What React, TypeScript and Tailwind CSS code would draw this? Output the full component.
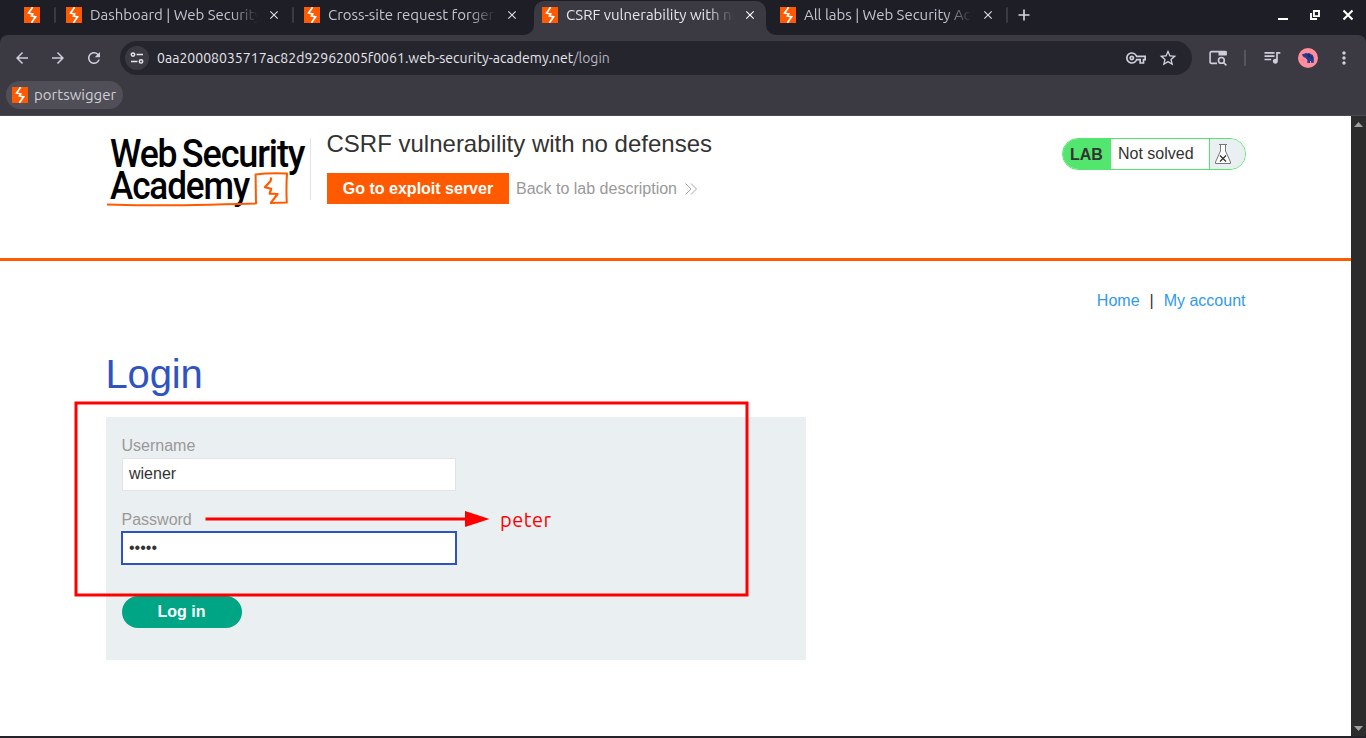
import { ReactNode } from 'react';
import {
  MdArrowBack,
  MdArrowForward,
  MdClose,
  MdMoreVert,
  MdOutlineVpnKey,
  MdQueueMusic,
  MdRefresh,
  MdStarBorder,
} from 'react-icons/md';

function Favicon() {
  return (
    <svg className="h-4 w-4 shrink-0" viewBox="0 0 16 16">
      <rect width="16" height="16" fill="#ff5a00" />
      <path
        d="M8.6 0.3 L4.6 6 L8.7 7 L7.4 9 L11.6 9.8 L7.4 15.8"
        fill="none"
        stroke="#fff"
        strokeWidth="1.7"
      />
    </svg>
  );
}

function Separator() {
  return (
    <div className="flex h-full w-1.5 shrink-0 items-center justify-center pb-[5px]">
      <div className="h-4 w-0.5 rounded-sm bg-[#3b3a43]" />
    </div>
  );
}

function Tab({ title, active = false }: { title: string; active?: boolean }) {
  return (
    <div
      className={
        'relative flex h-[34px] w-[232px] shrink-0 items-center self-end rounded-t-[10px] pb-1.5 pl-2 ' +
        (active ? 'bg-[#3b3a43] text-[#e6e5ea]' : 'text-[#c5c4d0]')
      }
    >
      <Favicon />
      <div className="ml-2 w-[168px] overflow-hidden whitespace-nowrap [mask-image:linear-gradient(to_right,black_84%,transparent)] text-[15px] leading-5 tracking-[-0.03px]">
        {title}
      </div>
      <MdClose className={'ml-[9px] h-[14px] w-[14px] ' + (active ? 'text-white' : 'text-[#dddce4]')} />
      {active && (
        <>
          <svg className="absolute bottom-0 -left-[10px] h-[10px] w-[10px]" viewBox="0 0 10 10">
            <path d="M10 0 A10 10 0 0 1 0 10 H10 Z" fill="#3b3a43" />
          </svg>
          <svg className="absolute -right-[10px] bottom-0 h-[10px] w-[10px]" viewBox="0 0 10 10">
            <path d="M0 0 A10 10 0 0 0 10 10 H0 Z" fill="#3b3a43" />
          </svg>
        </>
      )}
    </div>
  );
}

function TabStrip() {
  return (
    <div className="flex h-[35px] items-center bg-[#1e1e27]">
      <div className="flex w-[52px] shrink-0 pb-[5px] pl-6">
        <Favicon />
      </div>
      <Separator />
      <Tab title="Dashboard | Web Security" />
      <Separator />
      <Tab title="Cross-site request forgery" />
      <div className="w-1.5 shrink-0" />
      <Tab title="CSRF vulnerability with no" active />
      <div className="w-1.5 shrink-0" />
      <Tab title="All labs | Web Security Acad" />
      <Separator />
      <svg className="mb-[5px] ml-2 h-[12px] w-[12px]" viewBox="0 0 12 12">
        <path d="M6 0.5 V11.5 M0.5 6 H11.5" stroke="#d8d7e0" strokeWidth="1.6" />
      </svg>
      <div className="mr-3 mb-[5px] ml-auto flex items-center">
        <svg className="h-3 w-3" viewBox="0 0 12 12">
          <path d="M1 10 H11" stroke="#fff" strokeWidth="2" />
        </svg>
        <svg className="ml-5 h-3 w-3" viewBox="0 0 12 12">
          <path d="M4.9 2 H10 V7.1 H4.9 Z M2 4 V10 H8" fill="none" stroke="#fff" strokeWidth="1.9" />
        </svg>
        <svg className="ml-[21px] h-3 w-3" viewBox="0 0 12 12">
          <path d="M1.5 1.5 L10.5 10.5 M10.5 1.5 L1.5 10.5" stroke="#fff" strokeWidth="2.1" />
        </svg>
      </div>
    </div>
  );
}

function Toolbar() {
  return (
    <div className="flex h-[46px] items-center bg-[#3b3a43] pl-[13px] text-[#cfcedb]">
      <MdArrowBack className="h-[18px] w-[18px]" />
      <MdArrowForward className="ml-[18px] h-[18px] w-[18px]" />
      <MdRefresh className="ml-[18px] h-[18px] w-[18px]" />
      <div className="ml-[17px] flex h-[34px] w-[1072px] items-center rounded-full bg-[#25252e] pl-[5px]">
        <div className="flex h-6 w-6 items-center justify-center rounded-full bg-[#3b3a43]">
          <svg className="h-[14px] w-[14px]" viewBox="0 0 14 14">
            <g fill="none" stroke="#e6e5ea" strokeWidth="1.5">
              <circle cx="3" cy="3.6" r="1.7" />
              <path d="M6.6 3.6 H13" />
              <circle cx="11" cy="10.4" r="1.7" />
              <path d="M1 10.4 H7.4" />
            </g>
          </svg>
        </div>
        <div className="ml-2 whitespace-nowrap text-[14px] leading-5 tracking-[0.03px] text-[#e6e5ea]">
          0aa20008035717ac82d92962005f0061.web-security-academy.net<span className="text-[#b5b4bf]">/login</span>
        </div>
        <MdOutlineVpnKey className="mr-3 ml-auto h-5 w-5" />
        <MdStarBorder className="mr-[14px] h-5 w-5" />
      </div>
      <svg className="ml-[17px] h-[16px] w-[18px]" viewBox="0 0 18 16">
        <path d="M8 13.4 H2.5 Q1.1 13.4 1.1 12 V3 Q1.1 1.6 2.5 1.6 H16 Q17 1.6 17 2.8 V5" fill="none" stroke="#cfcedb" strokeWidth="1.6" />
        <path d="M9.5 1 H17.6 V5.6 H9.5 Z" fill="#cfcedb" />
        <circle cx="12.4" cy="10.4" r="2.9" fill="none" stroke="#cfcedb" strokeWidth="1.6" />
        <path d="M14.5 12.5 L17.4 15.4" stroke="#cfcedb" strokeWidth="1.7" />
      </svg>
      <div className="ml-[17px] h-4 w-0.5 bg-[#55545f]" />
      <MdQueueMusic className="mb-0.5 ml-4 h-5 w-5" />
      <svg className="ml-4 h-5 w-5" viewBox="0 0 20 20">
        <circle cx="10" cy="10" r="10" fill="#ff8d9b" />
        <path
          d="M4 7 Q4.4 5.6 6.4 5.8 Q8 4.6 9.6 5.4 Q11 4.6 12.4 5.8 Q15.4 6.6 15.8 9.4 V14.8 H13 V13 H12 V15 H9.4 V11.8 Q7.8 11.2 7.4 9.6 H6 L4.8 8 Z"
          fill="#253b8c"
        />
        <path d="M9.2 6.8 H11.4 V9 H9.8 M13 8 L14.2 10.6" fill="none" stroke="#18235c" strokeWidth="0.9" />
      </svg>
      <MdMoreVert className="ml-4 h-5 w-5" />
    </div>
  );
}

function BookmarksBar() {
  return (
    <div className="flex h-[35px] items-start border-b border-[#4b4a53] bg-[#3b3a43] pl-1.5">
      <div className="flex h-7 w-[117px] items-center rounded-full bg-[#504f58] pl-1.5">
        <Favicon />
        <span className="ml-1.5 text-[15px] leading-5 text-[#cfced6]">portswigger</span>
      </div>
    </div>
  );
}

function AcademyLogo() {
  return (
    <svg
      className="h-[74px] w-[204px] shrink-0 tracking-[-1.2px]"
      viewBox="106 136 204 74"
      fontFamily="Roboto, sans-serif"
      fontWeight="500"
      fontSize="38"
    >
      <text x="110" y="166.6" textLength="66.5" lengthAdjust="spacingAndGlyphs">Web</text>
      <text x="181.8" y="166.6" textLength="122.5" lengthAdjust="spacingAndGlyphs">Security</text>
      <text x="110" y="199.2" textLength="139" lengthAdjust="spacingAndGlyphs">Academy</text>
      <g fill="none" stroke="#ff5a00" strokeLinejoin="round">
        <path d="M107 204.6 Q150 206.5 256 203.4 L255.6 174.4 Q270 172.8 287 173.6 Q286 188 286.8 202.6 L270 203" strokeWidth="2" />
        <path d="M271.2 177.5 L270.6 181 L264.8 187.2 L271.2 188.8 L269.6 193.6 L277.6 194 L271 202.6" strokeWidth="2.2" />
      </g>
    </svg>
  );
}

function LabStatus() {
  return (
    <div className="mt-[22px] ml-auto flex h-8 w-[184px] overflow-hidden rounded-full border border-[#53e66f] text-[#333332]">
      <div className="flex w-12 items-center bg-[#53e66f] pt-px pl-[7.5px] font-bold">LAB</div>
      <div className="flex flex-1 items-center pl-[7.5px]">Not solved</div>
      <div className="flex w-[36px] items-center border-l border-[#53e66f] bg-[#eaeff2] pl-1">
        <svg className="h-[22px] w-[18px]" viewBox="0 0 18 22">
          <path d="M5 1.5 H13 M6.5 1.5 V8 L1.5 19 V20.5 H16.5 V19 L11.5 8 V1.5" fill="#fff" stroke="#777" strokeWidth="1" />
          <path d="M6 12.5 L12 18.5 M12 12.5 L6 18.5" stroke="#333332" strokeWidth="1.3" />
        </svg>
      </div>
    </div>
  );
}

function LabHeader() {
  return (
    <header className="h-[145px] border-b-[3px] border-[#ff5a00]">
      <div className="mx-auto flex w-[1140px] items-start">
        <div className="mt-5">
          <AcademyLogo />
        </div>
        <div className="mt-[22px] h-[62px] w-px bg-[#e3e3e3]" />
        <div className="ml-4 text-[#333332]">
          <h2 className="mt-3 text-2xl leading-8">CSRF vulnerability with no defenses</h2>
          <div className="mt-[13px] flex items-center">
            <a className="flex h-[31px] w-[182px] items-center justify-center bg-[#ff5a00] pl-px font-bold text-white">
              Go to exploit server
            </a>
            <a className="ml-[7.5px] flex items-center text-[#999]">
              Back to lab description
              <svg className="ml-2 h-3 w-3" viewBox="0 0 12 12">
                <path d="M0.5 0.5 L6 6 L0.5 11.5 M6 0.5 L11.5 6 L6 11.5" fill="none" stroke="#999" strokeWidth="0.9" />
              </svg>
            </a>
          </div>
        </div>
        <LabStatus />
      </div>
    </header>
  );
}

function Field({ label, children }: { label: string; children: ReactNode }) {
  return (
    <div className="flex h-[74px] flex-col">
      <label className="ml-4 pt-px leading-6 text-[#999]">{label}</label>
      {children}
    </div>
  );
}

function LoginPage() {
  return (
    <main className="mx-auto w-[1140px] text-[#333332]">
      <nav className="flex justify-end pt-[28px] leading-6 text-[#2f9af0]">
        <a>Home</a>
        <span className="mx-[10px] text-[#333332]">|</span>
        <a>My account</a>
      </nav>
      <h1 className="mt-9 text-[40px] leading-[50px] tracking-[-0.15px] text-[#2f54c2]">Login</h1>
      <form className="mt-[18px] h-[243px] w-[700px] bg-[#eaeff2] pt-4">
        <Field label="Username">
          <div className="ml-4 flex h-[33px] w-[334px] items-center border border-[#e3e3e3] bg-white pb-0.5 pl-[6.5px]">
            wiener
          </div>
        </Field>
        <Field label="Password">
          <div className="-mt-px ml-[15px] flex h-[34px] w-[336px] items-center border-2 border-[#2f54c2] bg-white pb-px pl-[6.5px]">
            •••••
          </div>
        </Field>
        <div className="mt-[15px] ml-4 flex h-8 w-[120px] items-center justify-center rounded-full bg-[#00a585] pb-px font-bold text-white">
          Log in
        </div>
      </form>
    </main>
  );
}

function Scrollbar() {
  return (
    <div className="flex w-[15px] flex-col items-center justify-between bg-[#2c2c2c] pt-1.5 pb-[5px]">
      <svg className="h-[5px] w-[9px]" viewBox="0 0 9 5">
        <path d="M4.5 0 L9 5 H0 Z" fill="#9f9f9f" />
      </svg>
      <svg className="h-[5px] w-[9px]" viewBox="0 0 9 5">
        <path d="M0 0 H9 L4.5 5 Z" fill="#9f9f9f" />
      </svg>
    </div>
  );
}

function Annotations() {
  return (
    <div className="absolute top-[401px] left-[74px] h-[196px] w-[675px]">
      <svg className="h-[196px] w-[675px]" viewBox="0 0 675 196">
        <rect x="2" y="2" width="671" height="192" fill="none" stroke="#f00" strokeWidth="3" />
        <path d="M131.5 118 H393" stroke="#f00" strokeWidth="3" />
        <path d="M391 110 L415.5 118 L391 126 Z" fill="#f00" />
      </svg>
      <span className="absolute top-[107px] left-[426px] text-[20px] leading-6 font-normal tracking-[0.5px] text-[#ff0000]">peter</span>
    </div>
  );
}

export default function App() {
  return (
    <div className="relative flex h-[738px] w-[1366px] flex-col overflow-hidden bg-[#1e1e27] font-['Ubuntu','Noto_Sans',sans-serif]">
      <TabStrip />
      <div className="overflow-hidden rounded-t-[8px]">
        <Toolbar />
        <BookmarksBar />
      </div>
      <div className="flex h-[620px] font-['Liberation_Sans',Arial,sans-serif] text-base">
        <div className="w-[1351px] bg-white">
          <LabHeader />
          <LoginPage />
        </div>
        <Scrollbar />
      </div>
      <div className="h-0.5 bg-[#25222a]" />
      <Annotations />
    </div>
  );
}
